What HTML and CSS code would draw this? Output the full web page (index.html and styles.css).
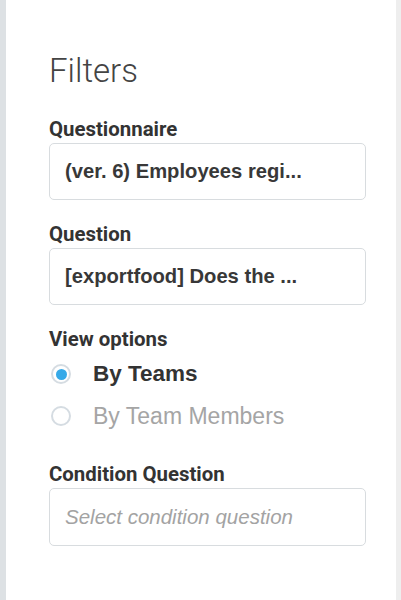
FILE: index.html
```html
<!DOCTYPE html>
<html>
<head>
<meta charset="utf-8">
<link rel="stylesheet" href="styles.css">
</head>
<body>
<div class="page">
  <div class="strip-left"></div>
  <main class="panel">
    <h1 class="title">Filters</h1>
    <div class="field">
      <div class="label">Questionnaire</div>
      <div class="box"><span class="value">(ver. 6) Employees regi...</span></div>
    </div>
    <div class="field">
      <div class="label">Question</div>
      <div class="box"><span class="value">[exportfood] Does the ...</span></div>
    </div>
    <div class="field options">
      <div class="label">View options</div>
      <div class="radio-row selected">
        <span class="radio"><span class="dot"></span></span>
        <span class="radio-text">By Teams</span>
      </div>
      <div class="radio-row">
        <span class="radio"></span>
        <span class="radio-text">By Team Members</span>
      </div>
    </div>
    <div class="field condition">
      <div class="label">Condition Question</div>
      <div class="box tall"><span class="placeholder">Select condition question</span></div>
    </div>
  </main>
  <div class="strip-right"></div>
</div>
</body>
</html>
```
FILE: styles.css
```css
html, body {
  margin: 0;
  padding: 0;
  background: #ffffff;
}
.page {
  display: flex;
  width: 401px;
  height: 600px;
}
.strip-left {
  width: 6px;
  background: #dde1e4;
  flex: none;
}
.strip-right {
  width: 5px;
  background: #eeeeee;
  flex: none;
}
.panel {
  flex: 1;
  background: #ffffff;
  padding: 51px 30px 0 43px;
  box-sizing: border-box;
}
.title {
  margin: 0 0 26px 0;
  font-family: Roboto, sans-serif;
  font-weight: 300;
  font-size: 33px;
  line-height: 40px;
  color: #444444;
}
.field {
  margin-bottom: 22px;
}
.label {
  font-family: Roboto, sans-serif;
  font-weight: 700;
  font-size: 20.4px;
  line-height: 24px;
  color: #333333;
  margin-bottom: 2px;
}
.box {
  height: 57px;
  border: 1px solid #d8dcdf;
  border-radius: 5px;
  box-sizing: border-box;
  display: flex;
  align-items: center;
  padding: 0 15px;
}
.box.tall {
  height: 58px;
}
.value {
  font-family: "Liberation Sans", Arial, sans-serif;
  font-weight: 700;
  font-size: 20.2px;
  color: #383838;
  white-space: nowrap;
}
.placeholder {
  font-family: "Liberation Sans", Arial, sans-serif;
  font-style: italic;
  font-size: 20.5px;
  color: #a3a3a3;
  white-space: nowrap;
}
.options .label {
  margin-bottom: 8px;
}
.options {
  margin-bottom: 31px;
}
.radio-row {
  display: flex;
  align-items: center;
  height: 30px;
  margin-bottom: 12px;
}
.radio-row:last-child {
  margin-bottom: 0;
}
.radio {
  width: 20px;
  height: 20px;
  box-sizing: border-box;
  border: 2px solid #d5dce2;
  border-radius: 50%;
  margin-left: 2px;
  margin-right: 22px;
  display: flex;
  align-items: center;
  justify-content: center;
  background: #ffffff;
}
.dot {
  width: 11px;
  height: 11px;
  border-radius: 50%;
  background: #36a9e8;
}
.radio-text {
  font-family: "Liberation Sans", Arial, sans-serif;
  font-weight: 400;
  font-size: 23px;
  color: #a5a5a5;
}
.selected .radio-text {
  font-weight: 700;
  font-size: 22.5px;
  color: #333333;
}
```
